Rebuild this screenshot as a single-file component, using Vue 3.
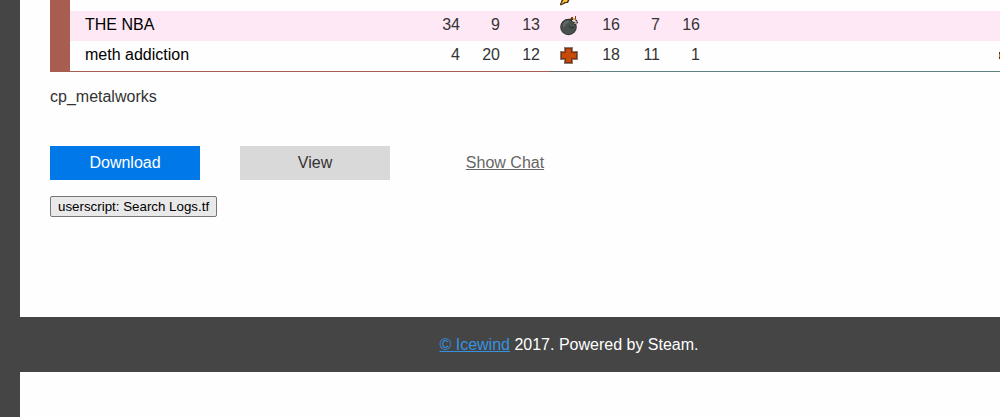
<script setup>
const rows = [
  { name: '', left: ['', '', ''], icon: 'scout', right: ['', '', ''] },
  { name: 'THE NBA', left: [34, 9, 13], icon: 'demoman', right: [16, 7, 16] },
  { name: 'meth addiction', left: [4, 20, 12], icon: 'medic', right: [18, 11, 1] },
]
</script>

<template>
  <div class="page">
    <main class="content">
      <table class="players">
        <colgroup>
          <col class="bar" />
          <col class="name" />
          <col v-for="n in 7" :key="n" class="num" />
          <col />
        </colgroup>
        <tbody>
          <tr v-for="(row, i) in rows" :key="i" :class="{ tinted: row.icon === 'demoman' }">
            <td class="team"></td>
            <td class="player red">{{ row.name }}</td>
            <td v-for="(n, k) in row.left" :key="'l' + k" class="stat red">{{ n }}</td>
            <td class="role">
              <svg v-if="row.icon === 'scout'" width="20" height="20" viewBox="0 0 20 20">
                <path d="M9 0 14 7 10 12 9.500 14 8 17 6 17 1 19.500 -.5 18.500 1 16 2 12 5 7Z" fill="#4b351c" />
                <path d="M9 3 12 7 8 12 8 14 6.500 16 4.500 16 1 18.500 3.500 14 4 11 6 8Z" fill="#ffc12d" />
              </svg>
              <svg v-else-if="row.icon === 'demoman'" width="20" height="20" viewBox="0 0 20 20">
                <circle cx="8.500" cy="11" r="8.300" fill="#303532" />
                <circle cx="8.500" cy="11" r="7.300" fill="#49504d" />
                <path d="M3 8Q5 4 10 5L8 7Q5 8 5 10L3 11Z" fill="#626865" />
                <path d="M9 9 11 11 15 10 13 13 9 12Z" fill="#353a37" />
                <path d="M9 3 12 2 17 4 18 7 15 9 12 6Z" fill="#35312c" />
                <path d="M12 4 15 4 17 6 16 7 14 6 12 5Z" fill="#d9d1c5" />
                <path d="M11 1h2v2h-2zM15 0h1v3h-1z" fill="#7d3d1b" />
                <path d="M13 2h2v2h-2z" fill="#dfa44e" />
                <path d="M14 7h3v1h-3z" fill="#9a9c95" />
              </svg>
              <svg v-else width="20" height="20" viewBox="0 0 20 20">
                <path d="M4 1H13V5H18V14H13V18H4V14H0V5H4Z" fill="#8d7c72" />
                <path d="M5 2H12V6H17V13H12V17H5V13H1V6H5Z" fill="#7d300b" />
                <path d="M6 3H11V7H16V12H11V16H6V12H2V7H6Z" fill="#c64b08" />
              </svg>
            </td>
            <td v-for="(n, k) in row.right" :key="'r' + k" class="stat blue">{{ n }}</td>
            <td class="opponent blue">
              <svg v-if="row.icon === 'medic'" width="1" height="8" viewBox="0 0 1 8">
                <path d="M0 0h1v7H0z" fill="#6d2809" />
                <path d="M0 2h1v3H0z" fill="#c67818" />
              </svg>
            </td>
          </tr>
        </tbody>
      </table>
      <p class="map">cp_metalworks</p>
      <div class="actions">
        <button class="action primary" type="button">Download</button>
        <button class="action" type="button">View</button>
        <a class="chat" href="#chat">Show Chat</a>
      </div>
      <button class="search" type="button">userscript: Search Logs.tf</button>
    </main>
    <footer class="footer">
      <span><a href="#icewind">© Icewind</a> 2017. Powered by Steam.</span>
    </footer>
  </div>
</template>

<style>
body {
  background: #fefefe;
}
</style>

<style scoped>
.page {
  min-height: 100vh;
  box-sizing: border-box;
  border-left: 20px solid #444544;
  overflow: hidden;
  color: #333;
  font: 16px/20px "Liberation Sans", Arial, sans-serif;
}
.content {
  padding: 0 0 100px 30px;
}
.players {
  width: 100%;
  margin-top: -19px;
  table-layout: fixed;
  border-collapse: separate;
  border-spacing: 0;
}
.bar {
  width: 20px;
}
.name {
  width: 360px;
}
.num {
  width: 40px;
}
td {
  height: 30px;
  padding: 0;
  line-height: 20px;
}
.tinted td {
  background: #ffe8f5;
}
.players td.team {
  background: #a75d50;
}
td.player {
  padding: 0 0 2px 15px;
  box-sizing: border-box;
  color: #000;
}
td.stat {
  padding: 0 10px 2px 0;
  box-sizing: border-box;
  text-align: right;
}
.role svg {
  display: block;
  margin: 0 auto;
}
.opponent svg {
  display: block;
  margin-left: auto;
}
tr:last-child td {
  height: 31px;
  box-sizing: border-box;
  border-bottom: 1px solid #666;
}
tr:last-child td.team,
tr:last-child td.red {
  border-color: #a75d50;
}
tr:last-child td.blue {
  border-color: #5b8580;
}
.map {
  margin: 15px 0 39px;
}
.actions {
  display: flex;
  align-items: center;
  gap: 40px;
}
.action {
  width: 150px;
  height: 34px;
  padding: 0;
  border: 0;
  background: #d9d9d9;
  color: #333;
  font: inherit;
}
.primary {
  background: #0078e7;
  color: #fff;
}
.chat {
  width: 150px;
  color: #666;
  text-align: center;
}
.search {
  display: block;
  height: 21px;
  margin-top: 16px;
  padding: 0 7px;
  border: 1px solid #767676;
  border-radius: 2px;
  background: #e9e9e9;
  color: #000;
  font-family: "Liberation Sans", Arial, sans-serif;
}
.footer {
  display: flex;
  align-items: center;
  justify-content: center;
  height: 55px;
  padding-left: 118px;
  background: #444544;
  color: #fff;
}
.footer a {
  color: #3592e0;
}
</style>
